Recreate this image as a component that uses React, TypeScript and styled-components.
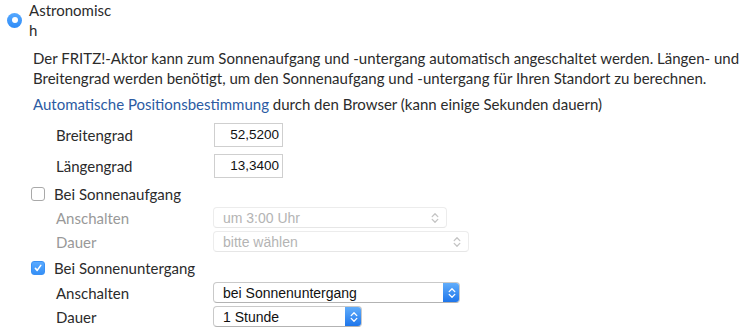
import styled, { createGlobalStyle } from "styled-components"

const GlobalStyle = createGlobalStyle`
  html, body {
    margin: 0;
    padding: 0;
    background: #ffffff;
  }
  body {
    font-family: "Lato", "Open Sans", sans-serif;
    font-size: 15px;
    color: #2b2b2b;
  }
`

const Page = styled.div`
  width: 754px;
  height: 331px;
  overflow: hidden;
`

const Header = styled.div`
  display: flex;
  align-items: center;
  height: 40px;
  padding-left: 7px;
  gap: 7px;
`

const Radio = styled.span`
  width: 15px;
  height: 15px;
  border-radius: 50%;
  background: linear-gradient(#55a8ff, #2f8cf7);
  display: flex;
  align-items: center;
  justify-content: center;
  flex-shrink: 0;
  &::after {
    content: "";
    width: 6px;
    height: 6px;
    border-radius: 50%;
    background: #ffffff;
  }
`

const RadioLabel = styled.span`
  width: 84px;
  line-height: 20px;
  word-break: break-all;
`

const Body = styled.div`
  padding-left: 31px;
  display: flex;
  flex-direction: column;
`

const Text = styled.p`
  margin: 8px 0 0 2px;
  line-height: 20px;
  width: 716px;
`

const LinkLine = styled.div`
  margin: 6px 0 0 2px;
  line-height: 20px;
`

const Link = styled.a`
  color: #2c5ba3;
  text-decoration: none;
`

const FieldRow = styled.div<{ $gap: number; $height: number }>`
  display: grid;
  grid-template-columns: 158px auto;
  align-items: center;
  height: ${(p) => p.$height}px;
  margin-top: ${(p) => p.$gap}px;
  padding-left: 25px;
  line-height: 20px;
`

const FieldLabel = styled.span<{ $disabled?: boolean }>`
  color: ${(p) => (p.$disabled ? "#999999" : "#2b2b2b")};
`

const NumberBox = styled.div`
  box-sizing: border-box;
  width: 69px;
  height: 24px;
  border: 1px solid #cfcfcf;
  font-family: "Liberation Sans", Arial, sans-serif;
  font-size: 13.5px;
  color: #111111;
  text-align: right;
  padding-right: 3px;
  line-height: 22px;
`

const CheckRow = styled.label`
  display: flex;
  align-items: center;
  gap: 9px;
  height: 20px;
  margin-top: 6px;
  line-height: 20px;
`

const Box = styled.span<{ $checked?: boolean }>`
  box-sizing: border-box;
  width: 14px;
  height: 14px;
  border-radius: 3px;
  border: 1px solid ${(p) => (p.$checked ? "#3a91f5" : "#a9a9a9")};
  background: ${(p) => (p.$checked ? "linear-gradient(#5aaaff, #3590f7)" : "#ffffff")};
  display: flex;
  align-items: center;
  justify-content: center;
  flex-shrink: 0;
`

const SelectBox = styled.div<{ $width: number; $disabled?: boolean }>`
  box-sizing: border-box;
  width: ${(p) => p.$width}px;
  height: 21px;
  margin-left: -1px;
  border-radius: 4px;
  border: 1px solid ${(p) => (p.$disabled ? "#ececec" : "#c9c9c9")};
  border-bottom-color: ${(p) => (p.$disabled ? "#e6e6e6" : "#b3b3b3")};
  background: #ffffff;
  display: flex;
  align-items: center;
  font-family: "Liberation Sans", Arial, sans-serif;
  font-size: 14px;
  color: ${(p) => (p.$disabled ? "#b4b4b4" : "#111111")};
  overflow: hidden;
`

const SelectText = styled.span`
  flex: 1;
  padding-left: 9px;
  white-space: nowrap;
`

const Stepper = styled.span<{ $disabled?: boolean }>`
  width: ${(p) => (p.$disabled ? 14 : 17)}px;
  align-self: stretch;
  display: flex;
  align-items: center;
  justify-content: center;
  background: ${(p) => (p.$disabled ? "transparent" : "linear-gradient(#64b0fc, #1b73ea)")};
  margin: ${(p) => (p.$disabled ? "0 4px 0 0" : "-1px -1px -1px 0")};
  border-radius: 0 4px 4px 0;
`

const Chevrons = ({ color }: { color: string }) => (
  <svg width="8" height="12" viewBox="0 0 8 12" fill="none" stroke={color} strokeWidth="1.3" strokeLinecap="round" strokeLinejoin="round">
    <path d="M1.2 4.6 L4 1.8 L6.8 4.6" />
    <path d="M1.2 7.4 L4 10.2 L6.8 7.4" />
  </svg>
)

const Select = ({ value, width, disabled }: { value: string; width: number; disabled?: boolean }) => (
  <SelectBox $width={width} $disabled={disabled}>
    <SelectText>{value}</SelectText>
    <Stepper $disabled={disabled}>
      <Chevrons color={disabled ? "#c4c4c4" : "#ffffff"} />
    </Stepper>
  </SelectBox>
)

const Check = ({ checked }: { checked?: boolean }) => (
  <Box $checked={checked}>
    {checked && (
      <svg width="10" height="10" viewBox="0 0 10 10" fill="none" stroke="#ffffff" strokeWidth="1.6" strokeLinecap="round" strokeLinejoin="round">
        <path d="M2.4 5.4 L4.2 7.4 L7.8 2.4" />
      </svg>
    )}
  </Box>
)

export default function App() {
  return (
    <Page>
      <GlobalStyle />
      <Header>
        <Radio />
        <RadioLabel>Astronomisch</RadioLabel>
      </Header>
      <Body>
        <Text>
          Der FRITZ!-Aktor kann zum Sonnenaufgang und -untergang automatisch angeschaltet werden. Längen- und
          Breitengrad werden benötigt, um den Sonnenaufgang und -untergang für Ihren Standort zu berechnen.
        </Text>
        <LinkLine>
          <Link href="#">Automatische Positionsbestimmung</Link> durch den Browser (kann einige Sekunden dauern)
        </LinkLine>
        <FieldRow $gap={9} $height={24}>
          <FieldLabel>Breitengrad</FieldLabel>
          <NumberBox>52,5200</NumberBox>
        </FieldRow>
        <FieldRow $gap={7} $height={24}>
          <FieldLabel>Längengrad</FieldLabel>
          <NumberBox>13,3400</NumberBox>
        </FieldRow>

        <CheckRow>
          <Check />
          Bei Sonnenaufgang
        </CheckRow>
        <FieldRow $gap={3} $height={21}>
          <FieldLabel $disabled>Anschalten</FieldLabel>
          <Select value="um 3:00 Uhr" width={234} disabled />
        </FieldRow>
        <FieldRow $gap={3} $height={21}>
          <FieldLabel $disabled>Dauer</FieldLabel>
          <Select value="bitte wählen" width={256} disabled />
        </FieldRow>

        <CheckRow>
          <Check checked />
          Bei Sonnenuntergang
        </CheckRow>
        <FieldRow $gap={4} $height={21}>
          <FieldLabel>Anschalten</FieldLabel>
          <Select value="bei Sonnenuntergang" width={247} />
        </FieldRow>
        <FieldRow $gap={3} $height={21}>
          <FieldLabel>Dauer</FieldLabel>
          <Select value="1 Stunde" width={149} />
        </FieldRow>
      </Body>
    </Page>
  )
}
